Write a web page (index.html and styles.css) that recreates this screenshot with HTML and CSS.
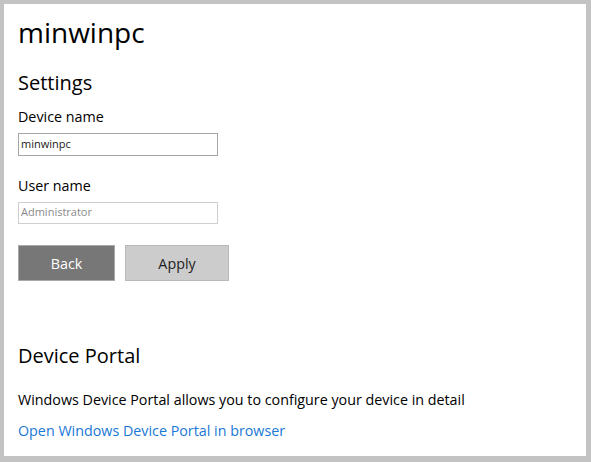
FILE: index.html
```html
<!DOCTYPE html>
<html>
<head>
<meta charset="utf-8">
<link rel="stylesheet" href="styles.css">
</head>
<body>
<div class="frame">
  <h1 class="title">minwinpc</h1>
  <h2 class="section">Settings</h2>
  <div class="field">
    <label class="label">Device name</label>
    <div class="input input-dark">minwinpc</div>
  </div>
  <div class="field field-user">
    <label class="label">User name</label>
    <div class="input input-light">Administrator</div>
  </div>
  <div class="buttons">
    <div class="btn btn-back">Back</div>
    <div class="btn btn-apply">Apply</div>
  </div>
  <h2 class="section portal">Device Portal</h2>
  <p class="desc">Windows Device Portal allows you to configure your device in detail</p>
  <a class="link">Open Windows Device Portal in browser</a>
</div>
</body>
</html>
```
FILE: styles.css
```css
html, body { margin: 0; padding: 0; }
body {
  width: 591px; height: 462px;
  background: #c3c3c3;
  font-family: "Open Sans", "Noto Sans", sans-serif;
  color: #000;
  box-sizing: border-box;
  padding: 4px 5px 6px 4px;
}
.frame {
  background: #fff;
  height: 452px;
  box-sizing: border-box;
  padding: 13px 0 0 14px;
  display: flex;
  flex-direction: column;
  align-items: flex-start;
}
.title {
  margin: 0;
  font-weight: 400;
  font-size: 28px;
  line-height: 30px;
}
.section {
  margin: 0;
  font-weight: 400;
  font-size: 20px;
  line-height: 26px;
}
.title + .section { margin-top: 23px; }
.field { display: flex; flex-direction: column; margin-top: 11px; }
.field-user { margin-top: 20px; }
.label { font-size: 14.3px; line-height: 20px; }
.input {
  width: 200px; height: 23px;
  box-sizing: border-box;
  margin-top: 6px;
  font-size: 11px;
  line-height: 19px;
  padding: 0 2px;
}
.input-dark { border: 1px solid #a6a6a6; color: #1a1a1a; }
.input-light { border: 1px solid #cfcfcf; color: #8a8a8a; height: 22px; line-height: 18px; }
.buttons { display: flex; gap: 10px; margin-top: 21px; }
.btn {
  height: 36px; box-sizing: border-box;
  display: flex; align-items: center; justify-content: center;
  font-size: 14.3px;
}
.btn-back { width: 97px; background: #777; border: 1px solid #a9a9a9; color: #fff; }
.btn-apply { width: 104px; background: #ccc; border: 1px solid #b9b9b9; color: #222; }
.portal { margin-top: 62px; }
.desc { margin: 21px 0 0 0; font-size: 14.3px; line-height: 20px; }
.link { margin-top: 11px; font-size: 14.3px; line-height: 20px; color: #1a78d6; }
```
